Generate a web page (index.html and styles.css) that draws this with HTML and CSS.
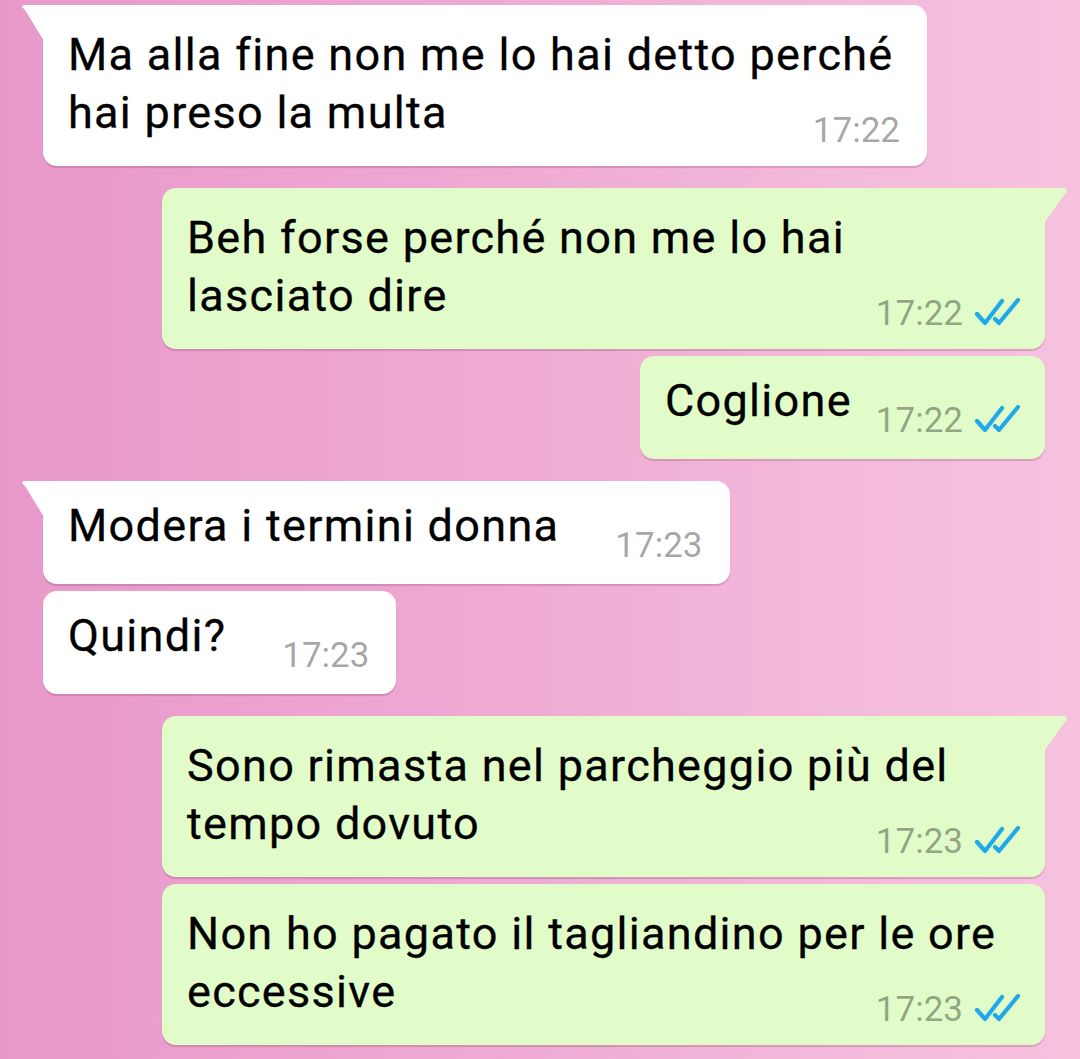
FILE: index.html
```html
<!DOCTYPE html>
<html lang="it">
<head>
<meta charset="utf-8">
<title>Chat</title>
<link rel="stylesheet" href="styles.css">
</head>
<body>
<div class="chat">
  <div class="bubble in tail multi full-in first">
    <div class="text">Ma alla fine non me lo hai detto perché<br>hai preso la multa</div>
    <div class="meta"><span class="time">17:22</span></div>
  </div>

  <div class="bubble out tail multi full-out sep">
    <div class="text">Beh forse perché non me lo hai<br>lasciato dire</div>
    <div class="meta"><span class="time">17:22</span><svg class="ticks" viewBox="0 0 46 28"><path d="M3 16 L11 25 L28 3 M21 21 L25 25 L44 2"/></svg></div>
  </div>

  <div class="bubble out single cont">
    <div class="text">Coglione</div>
    <div class="meta"><span class="time">17:22</span><svg class="ticks" viewBox="0 0 46 28"><path d="M3 16 L11 25 L28 3 M21 21 L25 25 L44 2"/></svg></div>
  </div>

  <div class="bubble in tail single sep">
    <div class="text">Modera i termini donna</div>
    <div class="meta"><span class="time">17:23</span></div>
  </div>

  <div class="bubble in single cont">
    <div class="text">Quindi?</div>
    <div class="meta"><span class="time">17:23</span></div>
  </div>

  <div class="bubble out tail multi full-out sep">
    <div class="text">Sono rimasta nel parcheggio più del<br>tempo dovuto</div>
    <div class="meta"><span class="time">17:23</span><svg class="ticks" viewBox="0 0 46 28"><path d="M3 16 L11 25 L28 3 M21 21 L25 25 L44 2"/></svg></div>
  </div>

  <div class="bubble out multi full-out cont">
    <div class="text">Non ho pagato il tagliandino per le ore<br>eccessive</div>
    <div class="meta"><span class="time">17:23</span><svg class="ticks" viewBox="0 0 46 28"><path d="M3 16 L11 25 L28 3 M21 21 L25 25 L44 2"/></svg></div>
  </div>
</div>
</body>
</html>
```

FILE: styles.css
```css
html, body {
  margin: 0;
  padding: 0;
}

body {
  width: 1080px;
  height: 1059px;
  overflow: hidden;
  background: linear-gradient(to right, #e899ca 0%, #eea7d2 40%, #f3b8da 75%, #f6c2de 100%);
  font-family: Roboto, "Liberation Sans", sans-serif;
}

.chat {
  display: flex;
  flex-direction: column;
  padding: 5px 35px 0 43px;
}

.bubble {
  position: relative;
  box-sizing: border-box;
  display: flex;
  align-items: flex-start;
  border-radius: 14px;
  box-shadow: 0 1.5px 1px rgba(120, 40, 90, 0.22);
  color: #000;
}

.bubble.in {
  align-self: flex-start;
  background: #ffffff;
  padding-left: 25px;
  padding-right: 27px;
}

.bubble.out {
  align-self: flex-end;
  background: #e1fcc8;
  padding-left: 25px;
  padding-right: 25px;
}

.bubble.in.tail { border-top-left-radius: 0; }
.bubble.out.tail { border-top-right-radius: 0; }

.bubble.in.tail::before {
  content: "";
  position: absolute;
  top: 0;
  left: -21px;
  width: 22px;
  height: 36px;
  background: #ffffff;
  clip-path: polygon(0 0, 100% 0, 100% 100%, 3px 5px, 0 2px);
  border-top-left-radius: 3px;
}

.bubble.out.tail::before {
  content: "";
  position: absolute;
  top: 0;
  right: -22px;
  width: 23px;
  height: 35px;
  background: #e1fcc8;
  clip-path: polygon(0 0, calc(100% - 2px) 0, 100% 3px, 0 100%);
}

.first { margin-top: 0; }
.sep { margin-top: 22px; }
.cont { margin-top: 7px; }

.text {
  font-size: 45px;
  letter-spacing: 1.3px;
  line-height: 58px;
  white-space: nowrap;
  -webkit-text-stroke: 0.3px #000;
}

.meta {
  display: flex;
  align-items: center;
  height: 40px;
  font-size: 35px;
  line-height: 40px;
  color: rgba(0, 0, 0, 0.37);
  white-space: nowrap;
}

.bubble.in .meta { margin-left: 56px; }
.bubble.out .meta { margin-left: 24px; }

.ticks {
  width: 46px;
  height: 28px;
  margin-left: 11px;
  margin-bottom: 4px;
  fill: none;
  stroke: #1fa9ea;
  stroke-width: 4.2;
  stroke-linecap: round;
  stroke-linejoin: round;
}

/* single-line bubbles: time sits lower on the same row */
.single {
  height: 103px;
  padding-top: 16px;
}
.single .meta { margin-top: 29px; }

/* multi-line bubbles: time drops onto the last line's corner */
.multi {
  flex-wrap: wrap;
  height: 161px;
  padding-top: 21px;
}
.multi .text { flex-basis: 100%; }
.bubble.multi .meta {
  margin-left: auto;
  margin-top: -43px;
}

.full-in { width: 884px; }
.full-out { width: 883px; }
```
